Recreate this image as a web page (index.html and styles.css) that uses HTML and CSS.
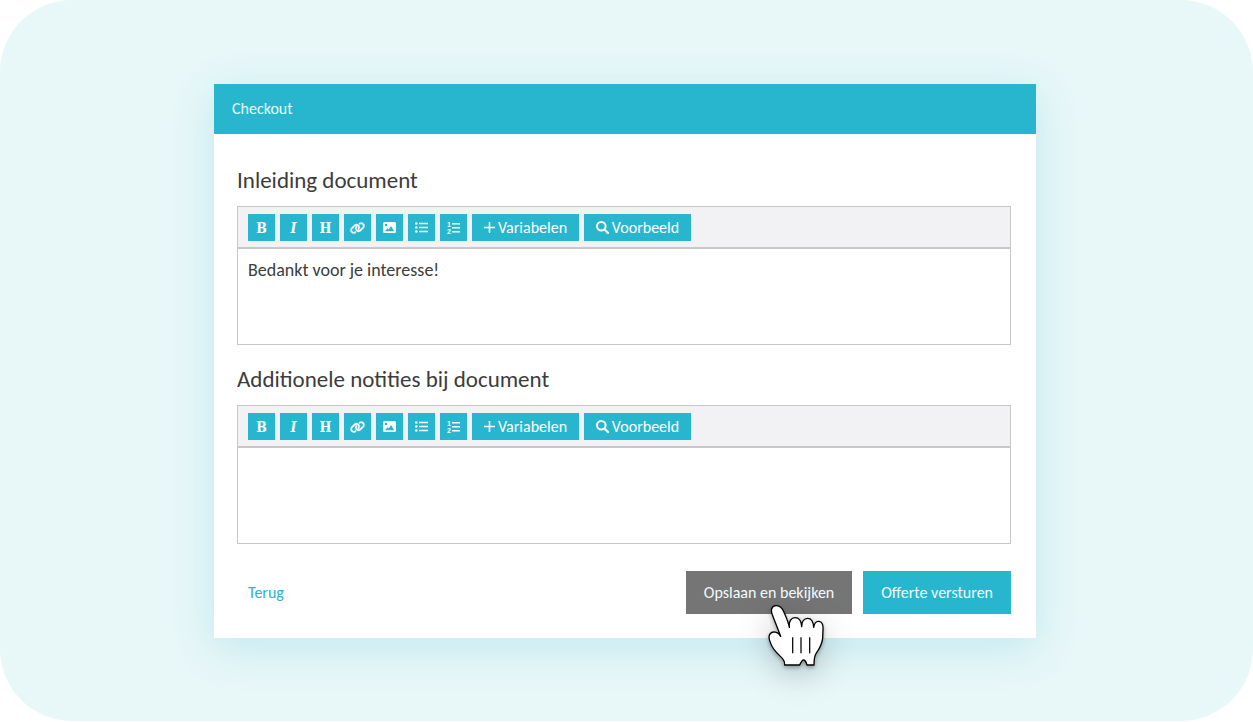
FILE: index.html
```html
<!DOCTYPE html>
<html lang="nl">
<head>
  <meta charset="UTF-8">
  <meta name="viewport" content="width=device-width, initial-scale=1.0">
  <title>Checkout</title>
  <link rel="stylesheet" href="styles.css">
</head>
<body>
  <!-- Iconen -->
  <svg class="sprite" aria-hidden="true">
    <symbol id="icon-link" viewBox="0 0 640 512">
      <path stroke="currentColor" stroke-width="14" d="M579.8 267.7c56.5-56.5 56.5-148 0-204.5c-50-50-128.8-56.5-186.3-15.4l-1.6 1.1c-14.4 10.3-17.7 30.3-7.4 44.6s30.3 17.7 44.6 7.4l1.6-1.1c32.1-22.9 76-19.3 103.8 8.6c31.5 31.5 31.5 82.5 0 114L422.3 334.8c-31.5 31.5-82.5 31.5-114 0c-27.9-27.9-31.5-71.8-8.6-103.8l1.1-1.6c10.3-14.4 6.9-34.4-7.4-44.6s-34.4-6.9-44.6 7.4l-1.1 1.6C206.5 251.2 213 330 263 380c56.5 56.5 148 56.5 204.5 0L579.8 267.7zM60.2 244.3c-56.5 56.5-56.5 148 0 204.5c50 50 128.8 56.5 186.3 15.4l1.6-1.1c14.4-10.3 17.7-30.3 7.4-44.6s-30.3-17.7-44.6-7.4l-1.6 1.1c-32.1 22.9-76 19.3-103.8-8.6C74 372 74 321 105.5 289.5L217.7 177.2c31.5-31.5 82.5-31.5 114 0c27.9 27.9 31.5 71.8 8.6 103.9l-1.1 1.6c-10.3 14.4-6.9 34.4 7.4 44.6s34.4 6.9 44.6-7.4l1.1-1.6C433.5 260.8 427 182 377 132c-56.5-56.5-148-56.5-204.5 0L60.2 244.3z"/>
    </symbol>
    <symbol id="icon-image" viewBox="0 0 13 11">
      <path fill-rule="evenodd" d="M1.5 0h10A1.5 1.5 0 0 1 13 1.5v8a1.5 1.5 0 0 1-1.5 1.5h-10A1.5 1.5 0 0 1 0 9.5v-8A1.5 1.5 0 0 1 1.5 0zM3 1.7a1.2 1.2 0 1 0 0 2.4a1.2 1.2 0 0 0 0-2.4zM2 9.2h9.2L8 4L5.6 7.5L4.4 6.2z"/>
    </symbol>
    <symbol id="icon-ul" viewBox="0 0 13 11">
      <circle cx="1.3" cy="1.5" r="1.3"/><circle cx="1.3" cy="5.5" r="1.3"/><circle cx="1.3" cy="9.5" r="1.3"/>
      <path d="M4 .8h9v1.5H4zM4 4.8h9v1.5H4zM4 8.8h9v1.5H4z"/>
    </symbol>
    <symbol id="icon-plus" viewBox="0 0 11 11">
      <path d="M4.7 0h1.6v4.7H11v1.6H6.3V11H4.7V6.3H0V4.7h4.7z"/>
    </symbol>
    <symbol id="icon-search" viewBox="0 0 13 13">
      <circle cx="5.3" cy="5.3" r="4.3" fill="none" stroke="currentColor" stroke-width="2"/>
      <path d="M8.5 8.5L12 12" stroke="currentColor" stroke-width="2.2" stroke-linecap="round"/>
    </symbol>
  </svg>

  <main class="stage">
    <form class="card">
      <header class="card-header">Checkout</header>

      <div class="card-body">
        <section class="field">
          <label class="field-title" for="inleiding">Inleiding document</label>
          <div class="editor">
            <div class="toolbar">
              <button type="button" class="tool letter">B</button>
              <button type="button" class="tool letter italic">I</button>
              <button type="button" class="tool letter">H</button>
              <button type="button" class="tool" aria-label="Link"><svg width="15" height="12"><use href="#icon-link"/></svg></button>
              <button type="button" class="tool" aria-label="Afbeelding"><svg width="13" height="11"><use href="#icon-image"/></svg></button>
              <button type="button" class="tool" aria-label="Lijst"><svg width="13" height="11"><use href="#icon-ul"/></svg></button>
              <button type="button" class="tool" aria-label="Genummerde lijst">
                <svg width="13" height="13" viewBox="0 0 13 13">
                  <text x="0" y="6" class="digit">1</text>
                  <text x="0" y="13" class="digit">2</text>
                  <path d="M5 2h8v1.5H5zM5 6h8v1.5H5zM5 10h8v1.5H5z"/>
                </svg>
              </button>
              <button type="button" class="tool wide"><svg width="11" height="11"><use href="#icon-plus"/></svg>Variabelen</button>
              <button type="button" class="tool wide"><svg width="13" height="13"><use href="#icon-search"/></svg>Voorbeeld</button>
            </div>
            <textarea id="inleiding">Bedankt voor je interesse!</textarea>
          </div>
        </section>

        <section class="field">
          <label class="field-title" for="notities">Additionele notities bij document</label>
          <div class="editor">
            <div class="toolbar">
              <button type="button" class="tool letter">B</button>
              <button type="button" class="tool letter italic">I</button>
              <button type="button" class="tool letter">H</button>
              <button type="button" class="tool" aria-label="Link"><svg width="15" height="12"><use href="#icon-link"/></svg></button>
              <button type="button" class="tool" aria-label="Afbeelding"><svg width="13" height="11"><use href="#icon-image"/></svg></button>
              <button type="button" class="tool" aria-label="Lijst"><svg width="13" height="11"><use href="#icon-ul"/></svg></button>
              <button type="button" class="tool" aria-label="Genummerde lijst">
                <svg width="13" height="13" viewBox="0 0 13 13">
                  <text x="0" y="6" class="digit">1</text>
                  <text x="0" y="13" class="digit">2</text>
                  <path d="M5 2h8v1.5H5zM5 6h8v1.5H5zM5 10h8v1.5H5z"/>
                </svg>
              </button>
              <button type="button" class="tool wide"><svg width="11" height="11"><use href="#icon-plus"/></svg>Variabelen</button>
              <button type="button" class="tool wide"><svg width="13" height="13"><use href="#icon-search"/></svg>Voorbeeld</button>
            </div>
            <textarea id="notities"></textarea>
          </div>
        </section>

        <footer class="actions">
          <a href="#" class="back">Terug</a>
          <div class="save">
            <button type="button" class="btn btn-dark">Opslaan en bekijken</button>
            <!-- Handcursor -->
            <svg class="cursor" viewBox="51 27 180 195" width="60" height="65" aria-hidden="true">
              <path d="M92 124L68 62C61 46 64 33 78 32C91 31 97 40 102 52C108 66 115 80 118 97C116 78 124 68 135 68C148 68 154 78 155 95C155 80 162 70 173 70C185 70 190 80 191 97C193 84 198 78 207 79C218 81 220 92 219 104L218 130C215 152 206 164 199 174C193 183 192 194 192 210L171 210C169 203 164 195 160 195C156 195 152 204 149 210L104 210C104 200 103 196 98 191C88 180 68 165 62 145C57 134 55 124 60 117C67 107 85 110 92 124z" fill="#fff" stroke="#000" stroke-width="4" stroke-linejoin="round"/>
              <path d="M128 127v48M153 127v48M179 127v48" stroke="#111" stroke-width="4"/>
            </svg>
          </div>
          <button type="submit" class="btn">Offerte versturen</button>
        </footer>
      </div>
    </form>
  </main>
</body>
</html>
```
FILE: styles.css
```css
* {
  box-sizing: border-box;
}

body {
  margin: 0;
  background-color: #fff;
  color: #3c3c3c;
  font-family: Carlito, Lato, sans-serif;
}

button, textarea {
  font-family: inherit;
}

.sprite {
  position: absolute;
  width: 0;
  height: 0;
}

.stage {
  padding: 84px 217px 83px 214px;
  background-color: #e8f7f8;
  border-radius: 72px;
}

.card {
  background-color: #fff;
  box-shadow: 0 10px 40px rgba(38, 182, 210, 0.2);
}

.card-header {
  padding: 0 18px;
  background-color: #27b6ce;
  color: #e8fafc;
  font-size: 16px;
  line-height: 50px;
}

.card-body {
  padding: 31px 25px 24px 23px;
}

.field + .field {
  margin-top: 19px;
}

.field-title {
  display: block;
  margin-bottom: 11px;
  font-size: 23px;
  line-height: 30px;
}

.editor {
  border: 1px solid #c8c8c8;
}

.toolbar {
  display: flex;
  flex-wrap: wrap;
  gap: 5px;
  padding: 7px 10px 6px;
  background-color: #f2f2f4;
  border-bottom: 2px solid #c8c8c8;
}

.tool {
  display: flex;
  align-items: center;
  justify-content: center;
  width: 27px;
  height: 27px;
  padding: 0;
  border: none;
  background-color: #27b6ce;
  color: #fff;
  font-size: 16px;
  cursor: pointer;
}

.tool svg {
  fill: currentColor;
}

.letter {
  font-family: "DejaVu Serif Condensed", "DejaVu Serif", serif;
  font-size: 14px;
  font-weight: bold;
}

.italic {
  font-style: italic;
}

.digit {
  font-family: "Liberation Sans", sans-serif;
  font-size: 7px;
  font-weight: bold;
}

.wide {
  width: 107px;
  gap: 3px;
  padding-bottom: 1px;
}

textarea {
  display: block;
  width: 100%;
  height: 95px;
  padding: 10px;
  border: none;
  outline: none;
  resize: none;
  background-color: #fff;
  color: inherit;
  font-size: 18px;
  line-height: 22px;
}

.actions {
  display: flex;
  align-items: center;
  gap: 11px;
  margin-top: 27px;
}

.back {
  margin-left: 11px;
  margin-right: auto;
  color: #27b6ce;
  font-size: 16px;
  text-decoration: none;
}

.btn {
  height: 43px;
  padding: 0 18px 1px;
  border: none;
  background-color: #27b6ce;
  color: #f2fcfd;
  font-size: 16px;
  cursor: pointer;
}

.btn-dark {
  background-color: #757575;
}

.save {
  position: relative;
}

.cursor {
  position: absolute;
  top: 33px;
  left: 81px;
  overflow: visible;
  filter: drop-shadow(0 2px 2px rgba(0, 0, 0, 0.3)) drop-shadow(0 8px 16px rgba(0, 0, 0, 0.2));
  pointer-events: none;
}
```
